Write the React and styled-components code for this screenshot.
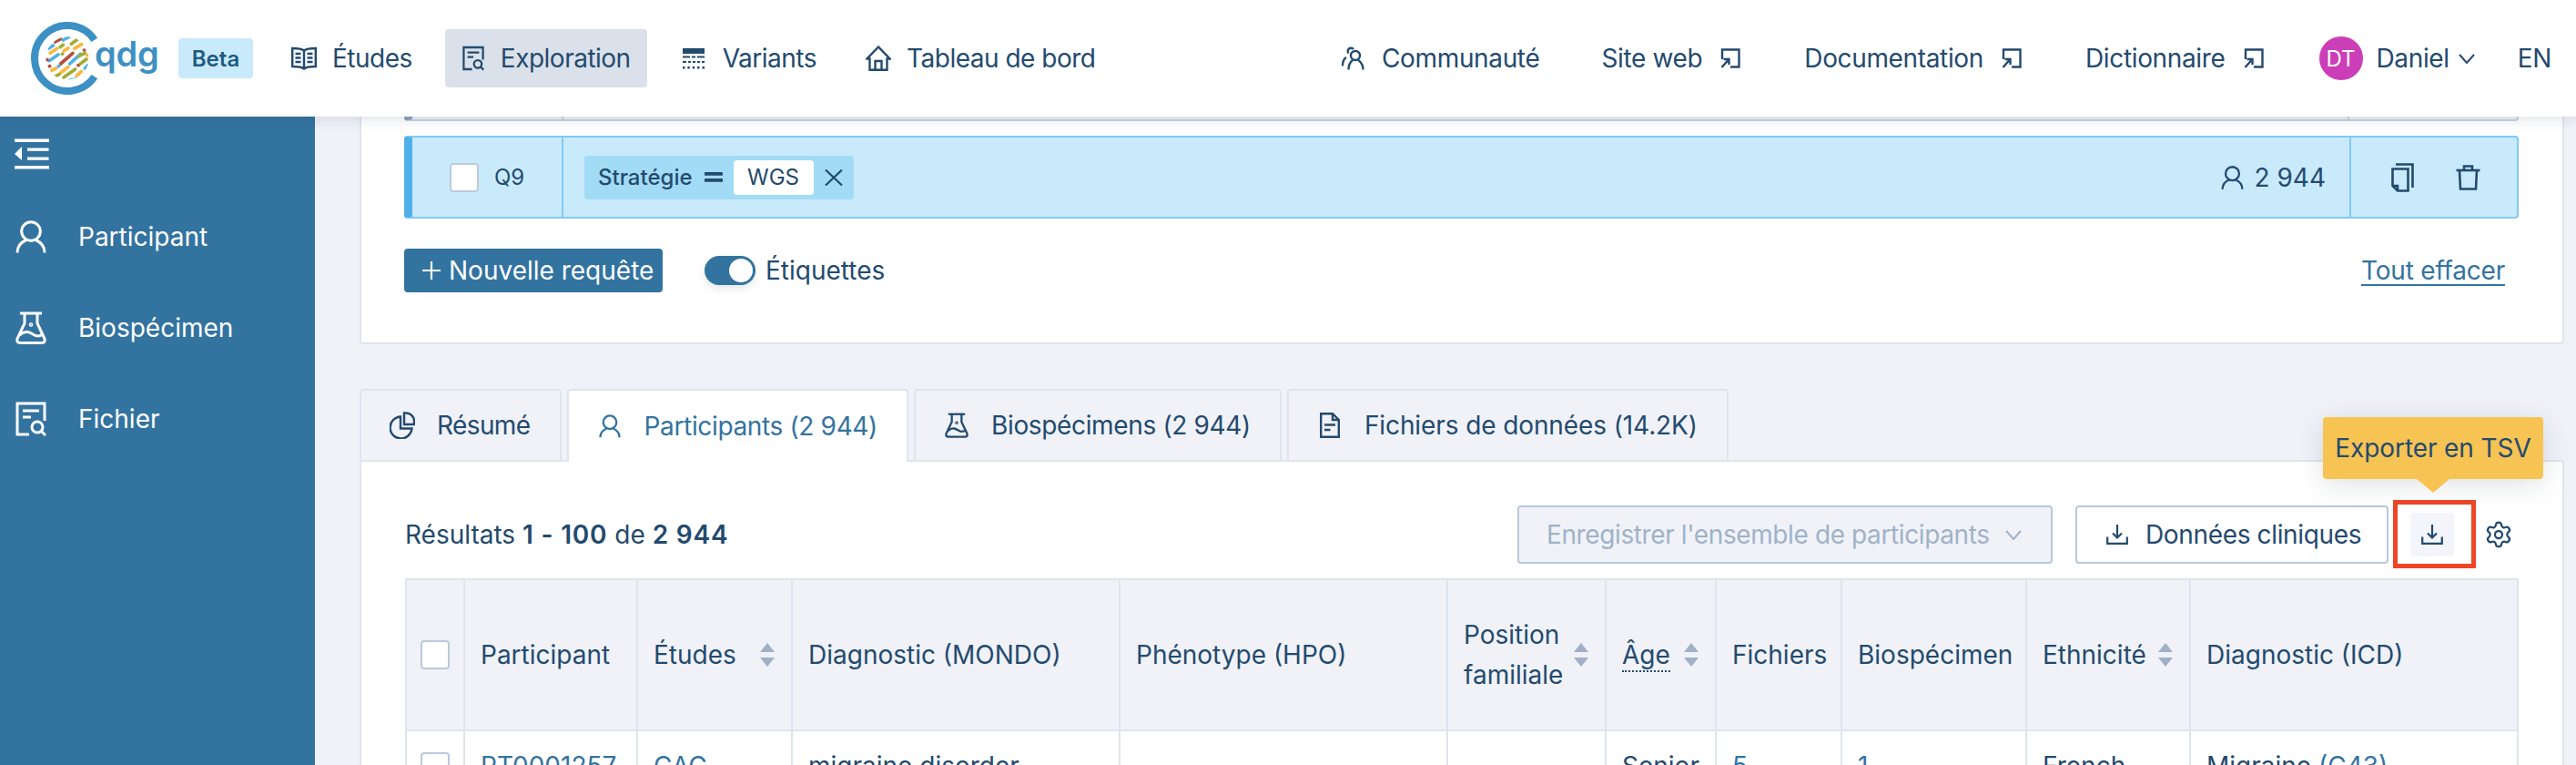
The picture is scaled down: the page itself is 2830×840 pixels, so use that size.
import React from 'react'
import styled, { createGlobalStyle } from 'styled-components'
import { Settings } from 'lucide-react'

const NAVY = '#234a6e'
const BLUE = '#33739f'
const LINE = '#dfe4ee'
const BG = '#f0f2f8'
const TIGHT = '-0.35px'

const GlobalStyle = createGlobalStyle`
  html, body {
    margin: 0;
    padding: 0;
    overflow: hidden;
    background: ${BG};
  }
  #root {
    width: 2830px;
    height: 840px;
    overflow: hidden;
    font-family: Inter, "Liberation Sans", sans-serif;
    font-size: 28px;
    color: ${NAVY};
  }
  * { box-sizing: border-box; }
`

const Page = styled.div`
  display: flex;
  flex-direction: column;
  height: 840px;
`

/* ---------- top bar ---------- */

const Header = styled.header`
  position: relative;
  z-index: 3;
  flex: none;
  display: flex;
  align-items: center;
  height: 128px;
  padding: 0 27px 0 34px;
  background: #fff;
  box-shadow: 0 3px 14px rgba(40, 60, 90, 0.14);
  letter-spacing: ${TIGHT};
`

const Logo = styled.div`
  display: flex;
  align-items: center;
  width: 141px;
  flex: none;
`

const LogoText = styled.span`
  margin: -11px 0 0 -6px;
  font-size: 38px;
  font-weight: 600;
  letter-spacing: -0.2px;
  color: #3d90c4;
`

const Beta = styled.span`
  flex: none;
  display: flex;
  align-items: center;
  justify-content: center;
  width: 82px;
  height: 44px;
  margin: 0 24px 0 21px;
  border-radius: 4px;
  background: #c9eafb;
  color: #1f5a80;
  font-size: 24px;
  font-weight: 600;
  letter-spacing: 0;
`

const NavGroup = styled.nav`
  display: flex;
  align-items: center;
  gap: 18px;
  letter-spacing: -0.5px;
`

const NavItem = styled.a`
  display: flex;
  align-items: center;
  gap: 17px;
  height: 64px;
  padding: 0 18px;
  border-radius: 4px;
  background: ${p => (p.$active ? '#dbe1ea' : 'transparent')};
  white-space: nowrap;
`

const IconBox = styled.span`
  flex: none;
  display: flex;
  align-items: center;
  justify-content: center;
  width: ${p => p.$w || 28}px;
`

const SideLinks = styled.nav`
  display: flex;
  align-items: center;
  gap: 70px;
  margin-left: auto;
`

const SideLink = styled.a`
  display: flex;
  align-items: center;
  gap: ${p => p.$gap || 20}px;
  margin-right: ${p => p.$after || 0}px;
  white-space: nowrap;
`

const UserMenu = styled.div`
  display: flex;
  align-items: center;
  margin-left: -9px;
  white-space: nowrap;
`

const Avatar = styled.span`
  display: flex;
  align-items: center;
  justify-content: center;
  width: 48px;
  height: 48px;
  margin-right: 15px;
  border-radius: 50%;
  background: #cc3eb8;
  color: #fff;
  font-size: 24px;
  letter-spacing: 0;
`

const UserChevron = styled.span`
  display: flex;
  margin-left: 10px;
`

const Lang = styled.span`
  margin-left: 47px;
`

/* ---------- side menu ---------- */

const Body = styled.div`
  flex: 1;
  min-height: 0;
  display: flex;
`

const Sidebar = styled.aside`
  flex: none;
  width: 346px;
  padding: 24px 0 0 16px;
  background: ${BLUE};
  color: #fff;
`

const SideToggle = styled.div`
  height: 34px;
  margin-bottom: 24px;
`

const SideItem = styled.div`
  display: flex;
  align-items: center;
  gap: 35px;
  height: 100px;
  padding-left: 1px;
`

/* ---------- query panel ---------- */

const Main = styled.main`
  flex: 1;
  min-width: 0;
  padding: 0 13px 0 49px;
`

const QueryPanel = styled.section`
  height: 250px;
  padding: 0 48px 0 47px;
  border: 2px solid ${LINE};
  border-top: 0;
  border-radius: 0 0 4px 4px;
  background: #fff;
`

const PrevRow = styled.div`
  display: flex;
  justify-content: space-between;
  height: 5px;
  padding: 0 184px 0 164px;
  border-left: 9px solid #8fa0b8;
  border-right: 2px solid #c8d2e0;
  border-bottom: 2px solid #c8d2e0;
  border-radius: 0 0 4px 4px;
  background: ${BG};
`

const PrevSep = styled.span`
  width: 2px;
  background: #c8d2e0;
`

const QueryRow = styled.div`
  display: flex;
  align-items: stretch;
  height: 91px;
  margin-top: 16px;
  border: 2px solid #7fcbf0;
  border-left: 9px solid #4fb0e8;
  border-radius: 4px;
  background: #c9eafb;
`

const QueryName = styled.div`
  flex: none;
  display: flex;
  align-items: center;
  gap: 17px;
  width: 166px;
  padding-left: 41px;
  border-right: 2px solid #7fcbf0;
  font-size: 24px;
`

const QueryBody = styled.div`
  flex: 1;
  display: flex;
  align-items: center;
  justify-content: space-between;
  padding: 0 26px 0 23px;
`

const QueryPill = styled.div`
  display: flex;
  align-items: center;
  height: 48px;
  padding: 0 12px 0 15px;
  border-radius: 4px;
  background: #a2dbf6;
  font-size: 24px;
`

const PillLabel = styled.span`
  margin-right: 13px;
  font-weight: 500;
`

const PillValue = styled.span`
  display: flex;
  align-items: center;
  justify-content: center;
  width: 88px;
  height: 38px;
  margin: 0 12px;
  border-radius: 4px;
  background: #fff;
`

const QueryCount = styled.div`
  display: flex;
  align-items: center;
  gap: 12px;
`

const QueryTools = styled.div`
  flex: none;
  display: flex;
  align-items: center;
  gap: 46px;
  width: 184px;
  padding-left: 44px;
  border-left: 2px solid #7fcbf0;
`

const Checkbox = styled.span`
  flex: none;
  display: block;
  width: 32px;
  height: 32px;
  border: 2px solid #bcc9da;
  border-radius: 4px;
  background: #fff;
`

const QueryActions = styled.div`
  display: flex;
  align-items: center;
  height: 48px;
  margin-top: 33px;
`

const PrimaryButton = styled.button`
  display: flex;
  align-items: center;
  gap: 9px;
  width: 284px;
  height: 48px;
  padding: 0 0 0 20px;
  border: 0;
  border-radius: 4px;
  background: ${BLUE};
  color: #fff;
  font: inherit;
`

const Switch = styled.span`
  display: flex;
  align-items: center;
  justify-content: flex-end;
  width: 56px;
  height: 32px;
  margin: 0 11px 0 46px;
  padding-right: 3px;
  border-radius: 16px;
  background: ${BLUE};
  box-shadow: 0 4px 8px rgba(30, 60, 90, 0.12);
`

const SwitchKnob = styled.span`
  width: 26px;
  height: 26px;
  border-radius: 50%;
  background: #fff;
`

const ClearLink = styled.a`
  margin: 0 15px 0 auto;
  color: ${BLUE};
  letter-spacing: -0.2px;
  text-decoration: underline;
  text-underline-offset: 5px;
`

/* ---------- tabs ---------- */

const TabBar = styled.div`
  position: relative;
  z-index: 1;
  display: flex;
  gap: 6px;
  height: 80px;
  margin-top: 49px;
`

const Tab = styled.div`
  display: flex;
  align-items: center;
  gap: 24px;
  height: 80px;
  padding: 0 32px 0 31px;
  border: 2px solid ${LINE};
  border-bottom: ${p => (p.$active ? '0' : `2px solid ${LINE}`)};
  border-radius: 4px 4px 0 0;
  background: ${p => (p.$active ? '#fff' : BG)};
  color: ${p => (p.$active ? BLUE : NAVY)};
  letter-spacing: ${p => p.$track}px;
  white-space: nowrap;
`

const TabPanel = styled.section`
  height: 400px;
  margin-top: -2px;
  padding: 48px 48px 0;
  border: 2px solid ${LINE};
  background: #fff;
`

const Toolbar = styled.div`
  display: flex;
  align-items: center;
  height: 64px;
`

const ToolbarRight = styled.div`
  display: flex;
  align-items: center;
  margin-left: auto;
`

const Strong = styled.b`
  font-weight: 600;
  letter-spacing: 0.8px;
`

const OutlineButton = styled.button`
  display: flex;
  align-items: center;
  gap: ${p => p.$gap}px;
  width: ${p => p.$width}px;
  height: 64px;
  padding: 0 0 0 ${p => p.$padLeft}px;
  margin-right: ${p => p.$after}px;
  border: 2px solid #bac8d9;
  border-radius: 4px;
  background: ${p => (p.disabled ? BG : '#fff')};
  color: ${p => (p.disabled ? '#9fb2c8' : NAVY)};
  font: inherit;
  letter-spacing: ${p => p.$track}px;
  white-space: nowrap;
`

const ExportWrap = styled.div`
  position: relative;
  width: 48px;
  height: 48px;
  margin-right: 33px;
`

const ExportButton = styled.span`
  display: flex;
  align-items: center;
  justify-content: center;
  width: 48px;
  height: 48px;
  border-radius: 4px;
  background: #f3f5fa;
`

const RedMark = styled.span`
  position: absolute;
  top: -14px;
  right: -24px;
  bottom: -13px;
  left: -19px;
  border: 5px solid #ee4527;
`

const Tooltip = styled.div`
  position: absolute;
  left: calc(50% + 1px);
  bottom: calc(100% + 37px);
  transform: translateX(-50%);
  width: 242px;
  height: 68px;
  display: flex;
  align-items: center;
  justify-content: center;
  border-radius: 4px;
  background: #f7c453;
  letter-spacing: -0.1px;
  white-space: nowrap;
  box-shadow: 0 6px 30px rgba(30, 40, 60, 0.14);

  &::after {
    content: '';
    position: absolute;
    left: 50%;
    top: 100%;
    margin-left: -18px;
    border-style: solid;
    border-width: 15px 18px 0;
    border-color: #f7c453 transparent transparent;
  }
`

const GearButton = styled.span`
  display: flex;
  margin-right: 6px;
`

/* ---------- table ---------- */

const COLS = '66px 190px 170px 360px 360px 174px 121px 138px 203px 180px 360px'

const Table = styled.div`
  margin-top: 16px;
`

const HeadRow = styled.div`
  display: grid;
  grid-template-columns: ${COLS};
  height: 168px;
  border-top: 2px solid ${LINE};
  border-bottom: 2px solid ${LINE};
  background: ${BG};
`

const Row = styled.div`
  display: grid;
  grid-template-columns: ${COLS};
  height: 90px;
  background: #fff;
`

const HeadCell = styled.div`
  display: flex;
  align-items: center;
  justify-content: ${p => (p.$center ? 'center' : 'space-between')};
  padding: ${p => (p.$center ? '0' : '0 18px 0 17px')};
  border-right: 2px solid ${LINE};
  border-left: ${p => (p.$center ? `2px solid ${LINE}` : '0')};
  line-height: 44px;
`

const Cell = styled.div`
  display: flex;
  justify-content: ${p => (p.$center ? 'center' : 'flex-start')};
  padding: ${p => (p.$center ? '23px 0 0' : '16px 18px 0 17px')};
  border-right: 2px solid ${LINE};
  border-left: ${p => (p.$center ? `2px solid ${LINE}` : '0')};
  line-height: 44px;
  white-space: nowrap;
`

const CellLink = styled.a`
  color: ${BLUE};
`

const Dotted = styled.span`
  line-height: 30px;
  border-bottom: 2px dotted ${NAVY};
`

/* ---------- drawn icons ---------- */

const Line = ({ w, h, vb, sw = 2.4, children }) => (
  <svg width={w} height={h} viewBox={vb} fill="none" stroke="currentColor" strokeWidth={sw}>
    {children}
  </svg>
)

const PILLS = [
  [92, 78, 110, 68, '#b5503c'], [118, 72, 140, 60, '#4fb0e8'], [70, 100, 85, 90, '#4fb0e8'],
  [75, 115, 98, 100, '#f7b93e'], [108, 95, 118, 88, '#a3ad35'], [145, 85, 165, 70, '#a3ad35'],
  [120, 108, 135, 98, '#f7b93e'], [155, 100, 180, 85, '#f7b93e'], [72, 140, 102, 120, '#4fb0e8'],
  [115, 118, 116, 118, '#a3ad35'], [110, 150, 150, 115, '#b5503c'], [140, 150, 175, 118, '#4fb0e8'],
  [187, 105, 188, 105, '#b5503c'], [170, 125, 190, 115, '#a3ad35'], [197, 122, 198, 122, '#f7b93e'],
  [65, 137, 66, 137, '#b5503c'], [73, 158, 74, 158, '#b5503c'], [80, 172, 95, 165, '#f7b93e'],
  [103, 158, 104, 158, '#4fb0e8'], [110, 180, 135, 160, '#f7b93e'], [168, 155, 169, 155, '#b5503c'],
  [120, 195, 158, 168, '#a3ad35'], [95, 190, 105, 185, '#a3ad35'], [162, 190, 178, 175, '#f7b93e'],
  [175, 150, 195, 135, '#a3ad35'], [140, 205, 165, 200, '#4fb0e8'], [190, 165, 200, 155, '#4fb0e8'],
]

const LogoMark = () => (
  <svg width="76" height="80" viewBox="12 12 228 240">
    <defs>
      <clipPath id="logo-disk">
        <circle cx="132" cy="132" r="71" />
      </clipPath>
    </defs>
    <path
      d="M221.5 71.6A108 108 0 1 0 221.500 192.400"
      fill="none"
      stroke="#3d90c4"
      strokeWidth="24"
    />
    <g clipPath="url(#logo-disk)" strokeWidth="11" strokeLinecap="round">
      {PILLS.map(([x1, y1, x2, y2, c]) => (
        <line key={`${x1}-${y1}`} x1={x1} y1={y1} x2={x2} y2={y2} stroke={c} />
      ))}
    </g>
  </svg>
)

const BookIcon = () => (
  <Line w="28" h="26" vb="0 0 28 26">
    <path d="M14 4.500C11 2.500 5 2 1.200 2V22C6 22 11 22 14 24.500C17 22 22 22 26.800 22V2C23 2 17 2.500 14 4.500V24.500" />
    <path d="M4.500 8H10.500M4.500 12.500H10.500M4.500 17H10.500M17.500 8H23.500M17.500 12.500H23.500M17.500 17H23.500" />
  </Line>
)

const FileSearchIcon = ({ w = 24, h = 36, sw = 3.2 }) => (
  <Line w={w} h={h} vb="0 0 34 38" sw={sw}>
    <path d="M15 36H2V2H32V21" />
    <path d="M8 10H26M8 17H17" />
    <circle cx="24" cy="28" r="6" />
    <path d="M28.500 32.500L33 37" />
  </Line>
)

const VariantsIcon = () => (
  <svg width="24" height="23" viewBox="0 0 24 23" fill="currentColor">
    <rect width="24" height="6" />
    <path d="M0 8.500h8v2H0zM10 8.500h4v2h-4zM16 8.500h8v2h-8z" />
    <path d="M0 14h4v2H0zM6 14h3v2H6zM11 14h3v2h-3zM16 14h3v2h-3zM21 14h3v2h-3z" />
    <path d="M0 20h2.500v2.500H0zM5.300 20h2.500v2.500H5.300zM10.700 20h2.500v2.500h-2.500zM16 20h2.500v2.500H16zM21.500 20H24v2.500h-2.500z" />
  </svg>
)

const HomeIcon = () => (
  <Line w="28" h="28" vb="0 0 28 28">
    <path d="M14 1.500L1.500 14.500H4.500V26.800H23.500V14.500H26.500Z" />
    <path d="M10.500 26.800V17H17.500V26.800" />
  </Line>
)

const CommunityIcon = () => (
  <Line w="25" h="26" vb="0 0 25 26">
    <circle cx="15" cy="10" r="5" />
    <path d="M7.500 25.500C7.500 20 9.500 17 12 15M23.500 25.500C23.500 20 21 17 18 15" />
    <path d="M7.500 7.500A3.500 3.500 0 1 1 13 3" />
    <path d="M1 21.500C1 16.500 2.500 13.500 5 12" />
  </Line>
)

const ExternalIcon = () => (
  <Line w="22" h="22" vb="0 0 22 22">
    <path d="M2 12V1.500H20.500V20.500H11" />
    <path d="M1.500 21L9 12.500M3.500 12H9.500V18" />
  </Line>
)

const ChevronDown = () => (
  <Line w="18" h="11" vb="0 0 18 11" sw="2">
    <path d="M1 1L9 10L17 1" />
  </Line>
)

const PersonIcon = ({ w = 24, h = 26, sw = 3.2 }) => (
  <Line w={w} h={h} vb="0 0 34 36" sw={sw}>
    <circle cx="17" cy="12" r="10.300" />
    <path d="M2 35.500C2 28 6 24 12 21.500M32 35.500C32 28 28 24 22 21.500" />
  </Line>
)

const FlaskIcon = ({ w = 26, h = 28, sw = 3 }) => (
  <Line w={w} h={h} vb="0 0 34 36" sw={sw}>
    <path d="M5 2H29" />
    <path d="M10 2V13L2 30Q1 34.500 5 34.500H29Q33 34.500 32 30L24 13V2" />
    <path d="M4.500 26C11 20 16 23 20 25.500C24 28 27 27 29.500 25" />
    <circle cx="17" cy="14.500" r="0.800" />
  </Line>
)

const MenuIcon = () => (
  <svg width="38" height="34" viewBox="0 0 38 34" fill="#fff">
    <rect width="38" height="3.500" y="0.500" />
    <rect x="14" width="23.500" height="3.300" y="10.500" />
    <rect x="14" width="23.500" height="3.300" y="20.500" />
    <rect width="38" height="3.500" y="30" />
    <path d="M8 9L0 17L8 24Z" />
  </svg>
)

const CloseIcon = () => (
  <Line w="20" h="18" vb="0 0 20 18" sw="2.200">
    <path d="M1 0.500L19 17.500M19 0.500L1 17.500" />
  </Line>
)

const EqualsIcon = () => (
  <svg width="20" height="11" viewBox="0 0 20 11" fill="currentColor">
    <rect width="20" height="3.800" rx="0.500" />
    <rect y="7" width="20" height="3.800" rx="0.500" />
  </svg>
)

const CopyIcon = () => (
  <Line w="25" h="32" vb="0 0 25 32" sw="2.600">
    <path d="M5 1.500H23.500V27" />
    <path d="M1.500 6.500H18.500V30.500H7L1.500 25Z" />
    <path d="M7 30.500V25H1.500" />
  </Line>
)

const TrashIcon = () => (
  <Line w="27" h="28" vb="0 0 27 28" sw="2.600">
    <path d="M0.500 6H26.500" />
    <path d="M9 6V1.500H18V6" />
    <path d="M4 6L5 26.500H22L23 6" />
  </Line>
)

const DownloadIcon = () => (
  <Line w="24" h="22" vb="0 0 24 22" sw="2.200">
    <path d="M12 0V14M7 9.500L12 14.500L17 9.500" />
    <path d="M1.200 13.500V20.800H22.800V13.500" />
  </Line>
)

const PieIcon = () => (
  <Line w="28" h="30" vb="0 0 28 30">
    <path d="M12 5.500A12 12 0 1 0 24.500 18.500H12Z" />
    <path d="M16 1.500H18A9 9 0 0 1 27 10.500V14H16Z" />
  </Line>
)

const DocIcon = () => (
  <Line w="22" h="28" vb="0 0 22 28" sw="2.400">
    <path d="M1.200 1.200H14L20.800 8V26.800H1.200Z" />
    <path d="M14 1.200V8H20.800" />
    <path d="M5 13.500H17M5 19H11.500" />
  </Line>
)

const SortArrows = () => (
  <svg width="16" height="26" viewBox="0 0 16 26" fill="#a0b0c6">
    <path d="M8 0L16 10H0Z" />
    <path d="M0 16H16L8 26Z" />
  </svg>
)

const PlusIcon = () => (
  <Line w="20" h="20" vb="0 0 20 20" sw="2.200">
    <path d="M10 0V20M0 10H20" />
  </Line>
)

/* ---------- data ---------- */

const NAV = [
  { label: 'Études', icon: <BookIcon /> },
  { label: 'Exploration', icon: <FileSearchIcon h={30} />, iconWidth: 26, active: true },
  { label: 'Variants', icon: <VariantsIcon />, iconWidth: 30 },
  { label: 'Tableau de bord', icon: <HomeIcon /> },
]

const SIDE = [
  { label: 'Participant', icon: <PersonIcon w={34} h={36} sw={3} /> },
  { label: 'Biospécimen', icon: <FlaskIcon w={34} h={36} sw={3} /> },
  { label: 'Fichier', icon: <FileSearchIcon w={34} h={38} sw={3} /> },
]

const TABS = [
  { label: 'Résumé', icon: <PieIcon />, track: -0.6 },
  { label: 'Participants (2 944)', icon: <PersonIcon />, track: -0.35, active: true },
  { label: 'Biospécimens (2 944)', icon: <FlaskIcon />, track: -0.35 },
  { label: 'Fichiers de données (14.2K)', icon: <DocIcon />, track: -0.1 },
]

const COLUMNS = [
  { label: 'Participant' },
  { label: 'Études', sort: true },
  { label: 'Diagnostic (MONDO)' },
  { label: 'Phénotype (HPO)' },
  { label: <>Position<br />familiale</>, sort: true },
  { label: <Dotted>Âge</Dotted>, sort: true },
  { label: 'Fichiers' },
  { label: 'Biospécimen' },
  { label: 'Ethnicité', sort: true },
  { label: 'Diagnostic (ICD)' },
]

export default function App() {
  return (
    <Page>
      <GlobalStyle />
      <Header>
        <Logo>
          <LogoMark />
          <LogoText>qdg</LogoText>
        </Logo>
        <Beta>Beta</Beta>
        <NavGroup>
          {NAV.map(item => (
            <NavItem key={item.label} $active={item.active}>
              <IconBox $w={item.iconWidth}>{item.icon}</IconBox>
              {item.label}
            </NavItem>
          ))}
        </NavGroup>
        <SideLinks>
          <SideLink $gap={17} $after={-2}>
            <IconBox><CommunityIcon /></IconBox>
            Communauté
          </SideLink>
          <SideLink>Site web <ExternalIcon /></SideLink>
          <SideLink>Documentation <ExternalIcon /></SideLink>
          <SideLink>Dictionnaire <ExternalIcon /></SideLink>
          <UserMenu>
            <Avatar>DT</Avatar>
            Daniel
            <UserChevron><ChevronDown /></UserChevron>
            <Lang>EN</Lang>
          </UserMenu>
        </SideLinks>
      </Header>

      <Body>
        <Sidebar>
          <SideToggle><MenuIcon /></SideToggle>
          {SIDE.map(item => (
            <SideItem key={item.label}>
              {item.icon}
              {item.label}
            </SideItem>
          ))}
        </Sidebar>

        <Main>
          <QueryPanel>
            <PrevRow>
              <PrevSep />
              <PrevSep />
            </PrevRow>
            <QueryRow>
              <QueryName>
                <Checkbox />
                Q9
              </QueryName>
              <QueryBody>
                <QueryPill>
                  <PillLabel>Stratégie</PillLabel>
                  <EqualsIcon />
                  <PillValue>WGS</PillValue>
                  <CloseIcon />
                </QueryPill>
                <QueryCount>
                  <PersonIcon w={25} h={26} />
                  2 944
                </QueryCount>
              </QueryBody>
              <QueryTools>
                <CopyIcon />
                <TrashIcon />
              </QueryTools>
            </QueryRow>
            <QueryActions>
              <PrimaryButton>
                <PlusIcon />
                Nouvelle requête
              </PrimaryButton>
              <Switch><SwitchKnob /></Switch>
              Étiquettes
              <ClearLink>Tout effacer</ClearLink>
            </QueryActions>
          </QueryPanel>

          <TabBar>
            {TABS.map(tab => (
              <Tab key={tab.label} $active={tab.active} $track={tab.track}>
                <IconBox>{tab.icon}</IconBox>
                {tab.label}
              </Tab>
            ))}
          </TabBar>
          <TabPanel>
            <Toolbar>
              <span>Résultats <Strong>1 - 100</Strong> de <Strong>2 944</Strong></span>
              <ToolbarRight>
                <OutlineButton disabled $gap={17} $width={588} $padLeft={30} $after={25} $track={-0.39}>
                  Enregistrer l'ensemble de participants
                  <ChevronDown />
                </OutlineButton>
                <OutlineButton $gap={19} $width={344} $padLeft={32} $after={24} $track={-0.35}>
                  <DownloadIcon />
                  Données cliniques
                </OutlineButton>
                <ExportWrap>
                  <ExportButton><DownloadIcon /></ExportButton>
                  <RedMark />
                  <Tooltip>Exporter en TSV</Tooltip>
                </ExportWrap>
                <GearButton><Settings size={32} strokeWidth={1.7} /></GearButton>
              </ToolbarRight>
            </Toolbar>

            <Table>
              <HeadRow>
                <HeadCell $center><Checkbox /></HeadCell>
                {COLUMNS.map((col, i) => (
                  <HeadCell key={i}>
                    <span>{col.label}</span>
                    {col.sort && <SortArrows />}
                  </HeadCell>
                ))}
              </HeadRow>
              <Row>
                <Cell $center><Checkbox /></Cell>
                <Cell><CellLink>PT0001257</CellLink></Cell>
                <Cell><CellLink>CAG</CellLink></Cell>
                <Cell>migraine disorder</Cell>
                <Cell />
                <Cell />
                <Cell>Senior</Cell>
                <Cell><CellLink>5</CellLink></Cell>
                <Cell><CellLink>1</CellLink></Cell>
                <Cell>French</Cell>
                <Cell>Migraine&nbsp;<CellLink>(C43)</CellLink></Cell>
              </Row>
            </Table>
          </TabPanel>
        </Main>
      </Body>
    </Page>
  )
}
